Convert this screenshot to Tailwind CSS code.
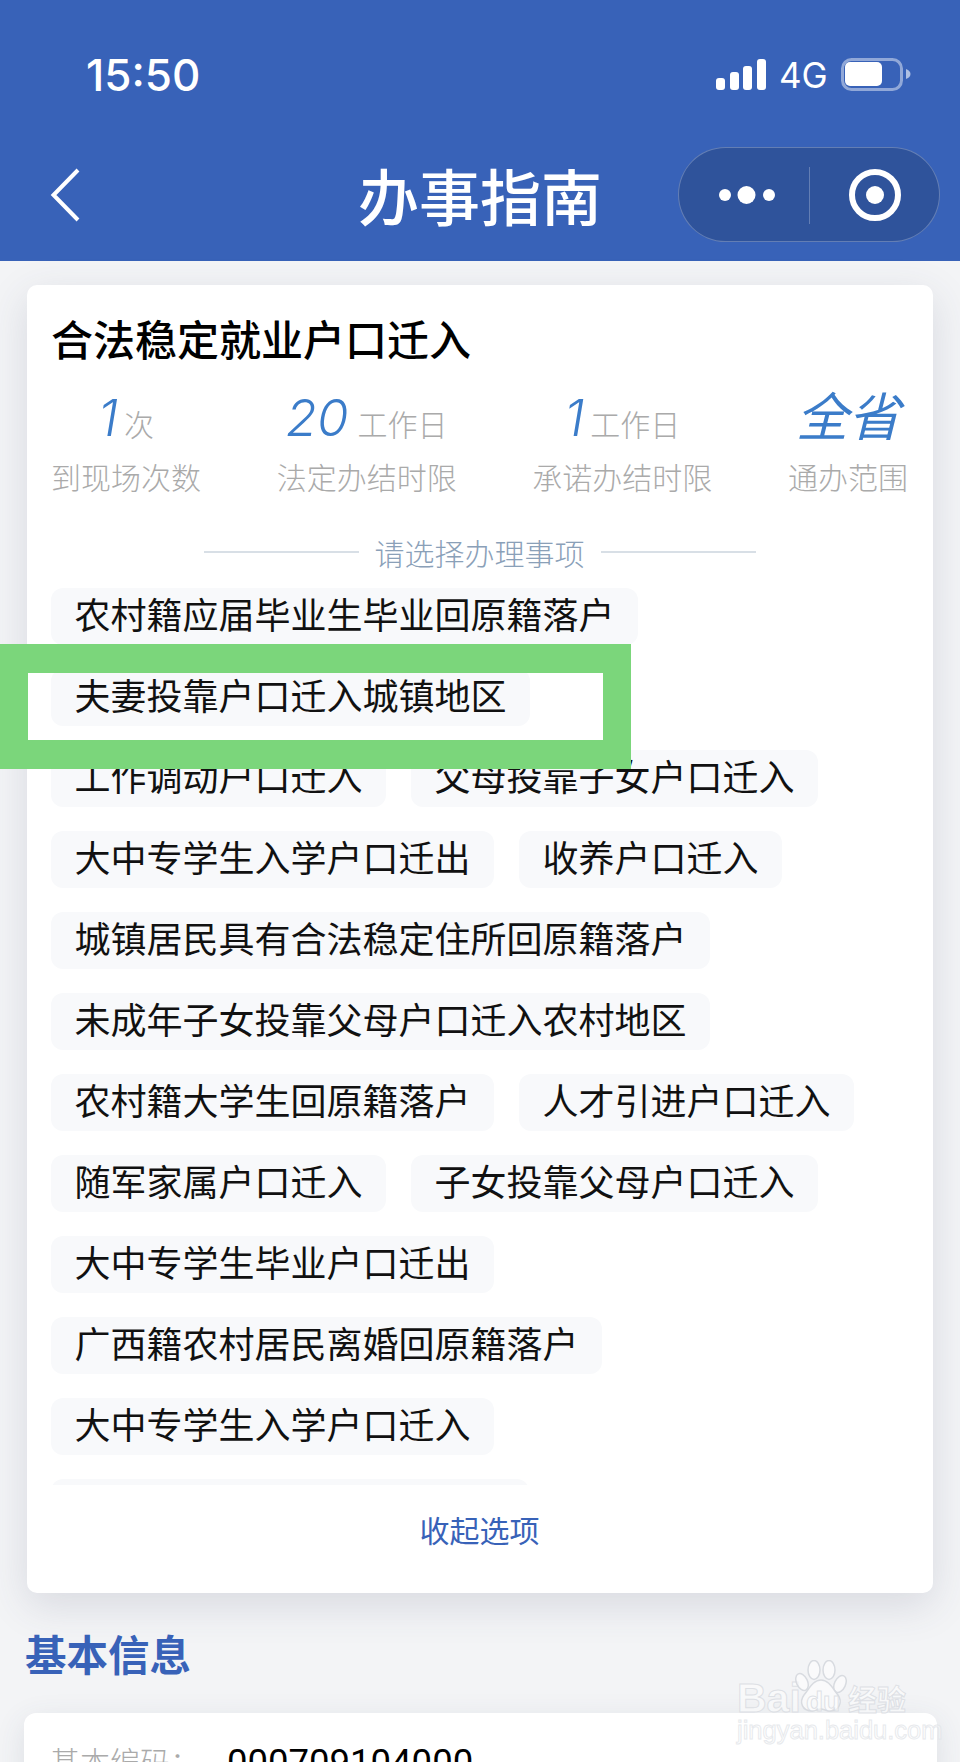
<!DOCTYPE html>
<html lang="zh">
<head>
<meta charset="utf-8">
<script src="https://cdn.jsdelivr.net/npm/@tailwindcss/browser@4"></script>
</head>
<body class="m-0">
<div class="relative w-[960px] h-[1762px] overflow-hidden bg-[#f3f4f6] font-['Noto_Sans_CJK_SC','Noto_Sans',sans-serif] text-[#111]">

  <header class="h-[261px] bg-[#3862b8] text-white">
    <div class="h-[45px]"></div>
    <div class="h-[60px] flex items-center pl-[86px] pr-[49px]">
      <span class="font-['Inter',sans-serif] font-medium text-[44px] leading-none">15:50</span>
      <div class="ml-auto flex items-center">
        <svg class="w-[51px] h-[32px]" viewBox="0 0 51 32" fill="#fff">
          <rect x="1" y="19" width="9" height="12" rx="3"/>
          <rect x="15" y="13" width="9" height="18" rx="3"/>
          <rect x="28" y="7" width="9" height="24" rx="3"/>
          <rect x="42" y="0" width="9" height="31" rx="3"/>
        </svg>
        <span class="ml-[13px] font-['Inter',sans-serif] text-[35px] leading-none w-[49px]">4G</span>
        <svg class="ml-[13px] w-[70px] h-[34px]" viewBox="0 0 70 34" fill="none">
          <rect x="1.500" y="1.500" width="59" height="30" rx="9" stroke="#fff" stroke-opacity=".45" stroke-width="3"/>
          <rect x="4" y="4" width="37" height="24" rx="5" fill="#fff"/>
          <path d="M65 11c3 1 4.500 3 4.500 5s-1.500 4-4.500 5z" fill="#fff" fill-opacity=".6"/>
        </svg>
      </div>
    </div>
    <div class="relative mt-[42px] h-[95px] flex items-center justify-center">
      <svg class="absolute left-[47px] top-[20px] w-[36px] h-[56px]" viewBox="0 0 36 56" fill="none">
        <path d="M31 3 6.500 28 31 53" stroke="#fff" stroke-width="4"/>
      </svg>
      <h1 class="text-[61px] font-medium leading-none -mt-px">办事指南</h1>
      <div class="absolute left-[678px] top-0 w-[262px] h-[95px] rounded-full border border-white/25 bg-[#2f539b] flex items-center">
        <svg class="absolute left-[40px] top-[37px] w-[56px] h-[20px]" viewBox="0 0 56 20" fill="#fff">
          <circle cx="6" cy="10" r="6"/><circle cx="27.500" cy="10" r="9"/><circle cx="50" cy="10" r="6"/>
        </svg>
        <div class="absolute left-[130px] top-[19px] w-px h-[57px] bg-white/25"></div>
        <svg class="absolute left-[169px] top-[20px] w-[54px] h-[54px]" viewBox="0 0 54 54" fill="none">
          <circle cx="27" cy="27" r="23" stroke="#fff" stroke-width="6"/><circle cx="27" cy="27" r="9" fill="#fff"/>
        </svg>
      </div>
    </div>
  </header>

  <section class="ml-[27px] mt-[24px] w-[906px] h-[1308px] rounded-[10px] bg-white shadow-[0_12px_40px_rgba(60,70,100,0.15)] pl-[24px] pt-[32px] flex flex-col">
    <h2 class="text-[42px] leading-[42px] font-medium text-black">合法稳定就业户口迁入</h2>

    <div class="mt-[29px] w-[857px] flex justify-between">
      <div class="w-[150px] text-center">
        <div class="h-[60px] flex items-baseline justify-center gap-[6px]">
          <span class="font-['Inter',sans-serif] font-light italic text-[51px] leading-[60px] text-[#3b7cc9]">1</span>
          <span class="text-[30px] font-light text-[#aaaaaa]">次</span>
        </div>
        <div class="mt-[12px] text-[30px] leading-[32px] font-light text-[#aaaaaa]">到现场次数</div>
      </div>
      <div class="w-[180px] text-center">
        <div class="h-[60px] flex items-baseline justify-center gap-[9px]">
          <span class="font-['Inter',sans-serif] font-light italic text-[51px] leading-[60px] text-[#3b7cc9]">20</span>
          <span class="text-[30px] font-light text-[#aaaaaa]">工作日</span>
        </div>
        <div class="mt-[12px] text-[30px] leading-[32px] font-light text-[#aaaaaa]">法定办结时限</div>
      </div>
      <div class="w-[180px] text-center">
        <div class="h-[60px] flex items-baseline justify-center gap-[6px]">
          <span class="font-['Inter',sans-serif] font-light italic text-[51px] leading-[60px] text-[#3b7cc9]">1</span>
          <span class="text-[30px] font-light text-[#aaaaaa]">工作日</span>
        </div>
        <div class="mt-[12px] text-[30px] leading-[32px] font-light text-[#aaaaaa]">承诺办结时限</div>
      </div>
      <div class="w-[120px] text-center">
        <div class="h-[60px] flex items-baseline justify-center">
          <span class="italic font-normal text-[52px] leading-[52px] text-[#3b7cc9] whitespace-nowrap">全省</span>
        </div>
        <div class="mt-[12px] text-[30px] leading-[32px] font-light text-[#aaaaaa]">通办范围</div>
      </div>
    </div>

    <div class="mt-[45px] w-[857px] h-[30px] flex items-center justify-center gap-[16px]">
      <div class="w-[155px] h-[2px] bg-[#d8dfe6]"></div>
      <span class="text-[30px] leading-[30px] font-light text-[#8aa0b8]">请选择办理事项</span>
      <div class="w-[155px] h-[2px] bg-[#d8dfe6]"></div>
    </div>

    <div class="mt-[21px] w-[830px] h-[897px] overflow-hidden">
      <div class="flex flex-wrap gap-x-[25px] gap-y-[24px] text-[36px] leading-[50px] text-[#111]">
        <span class="h-[57px] px-[23.500px] rounded-[12px] bg-[#f8f9fb]">农村籍应届毕业生毕业回原籍落户</span>
        <span class="h-[57px] px-[23.500px] rounded-[12px] bg-[#f8f9fb]">夫妻投靠户口迁入城镇地区</span>
        <span class="h-[57px] px-[23.500px] rounded-[12px] bg-[#f8f9fb]">工作调动户口迁入</span>
        <span class="h-[57px] px-[23.500px] rounded-[12px] bg-[#f8f9fb]">父母投靠子女户口迁入</span>
        <span class="h-[57px] px-[23.500px] rounded-[12px] bg-[#f8f9fb]">大中专学生入学户口迁出</span>
        <span class="h-[57px] px-[23.500px] rounded-[12px] bg-[#f8f9fb]">收养户口迁入</span>
        <span class="h-[57px] px-[23.500px] rounded-[12px] bg-[#f8f9fb]">城镇居民具有合法稳定住所回原籍落户</span>
        <span class="h-[57px] px-[23.500px] rounded-[12px] bg-[#f8f9fb]">未成年子女投靠父母户口迁入农村地区</span>
        <span class="h-[57px] px-[23.500px] rounded-[12px] bg-[#f8f9fb]">农村籍大学生回原籍落户</span>
        <span class="h-[57px] px-[23.500px] rounded-[12px] bg-[#f8f9fb]">人才引进户口迁入</span>
        <span class="h-[57px] px-[23.500px] rounded-[12px] bg-[#f8f9fb]">随军家属户口迁入</span>
        <span class="h-[57px] px-[23.500px] rounded-[12px] bg-[#f8f9fb]">子女投靠父母户口迁入</span>
        <span class="h-[57px] px-[23.500px] rounded-[12px] bg-[#f8f9fb]">大中专学生毕业户口迁出</span>
        <span class="h-[57px] px-[23.500px] rounded-[12px] bg-[#f8f9fb]">广西籍农村居民离婚回原籍落户</span>
        <span class="h-[57px] px-[23.500px] rounded-[12px] bg-[#f8f9fb]">大中专学生入学户口迁入</span>
        <span class="h-[57px] w-[478px] rounded-[12px] bg-[#f8f9fb]"></span>
      </div>
    </div>

    <div class="mt-[29px] w-[857px] text-center text-[30px] leading-[30px] font-normal text-[#3862b8]">收起选项</div>
  </section>

  <h3 class="ml-[25px] mt-[39px] text-[41.500px] leading-[42px] font-bold text-[#3862b8]">基本信息</h3>

  <section class="ml-[24px] mt-[39px] w-[913px] h-[200px] rounded-[12px] bg-white shadow-[0_8px_30px_rgba(60,70,100,0.12)] pl-[26px] pt-[32px] flex items-start">
    <span class="text-[30px] leading-[30px] font-light text-[#aaaaaa]">基本编码：</span>
    <span class="ml-[27px] font-['Roboto',sans-serif] text-[36.500px] leading-[36px] text-black">000709104000</span>
  </section>

  <!-- green highlight frame -->
  <div class="absolute left-0 top-[644px] w-[631px] h-[125px] border-[#7bd67b] border-x-[28px] border-y-[29px]"></div>

  <!-- watermark -->
  <div class="absolute left-[737px] top-[1660px] w-[172px] h-[82px]">
    <span class="absolute left-0 top-[18px] font-['Liberation_Sans',sans-serif] font-bold text-[41px] leading-[40px] text-white/50 [-webkit-text-stroke:1px_rgba(215,218,224,0.8)]">Bai</span>
    <svg class="absolute left-[58px] top-0 w-[52px] h-[54px]" viewBox="0 0 52 54" fill="#ffffff" fill-opacity=".55" stroke="#d8dbe0" stroke-width="1.500">
      <ellipse cx="7" cy="22" rx="5.500" ry="9" transform="rotate(-25 7 22)"/>
      <ellipse cx="19" cy="10" rx="6" ry="9.500"/>
      <ellipse cx="34" cy="10" rx="6" ry="9.500"/>
      <ellipse cx="45" cy="24" rx="5.500" ry="9" transform="rotate(25 45 24)"/>
      <path d="M26 20c8 0 12 9 17 15 5 7 1 17-9 16-3 0-5-2-8-2s-5 2-9 2C7 51 4 42 9 35c5-6 9-15 17-15z"/>
    </svg>
    <span class="absolute left-[69px] top-[28px] font-['Liberation_Sans',sans-serif] font-bold text-[28px] leading-[28px] text-white/50 [-webkit-text-stroke:1px_rgba(215,218,224,0.8)]">du</span>
    <span class="absolute left-[111px] top-[22px] font-bold text-[29px] leading-[32px] whitespace-nowrap text-white/50 [-webkit-text-stroke:1px_rgba(215,218,224,0.8)]">经验</span>
    <span class="absolute left-0 top-[57px] font-['Liberation_Sans',sans-serif] text-[25.500px] leading-[26px] whitespace-nowrap text-white/40 [-webkit-text-stroke:1px_rgba(225,228,232,0.8)]">jingyan.baidu.com</span>
  </div>
</div>
</body>
</html>
